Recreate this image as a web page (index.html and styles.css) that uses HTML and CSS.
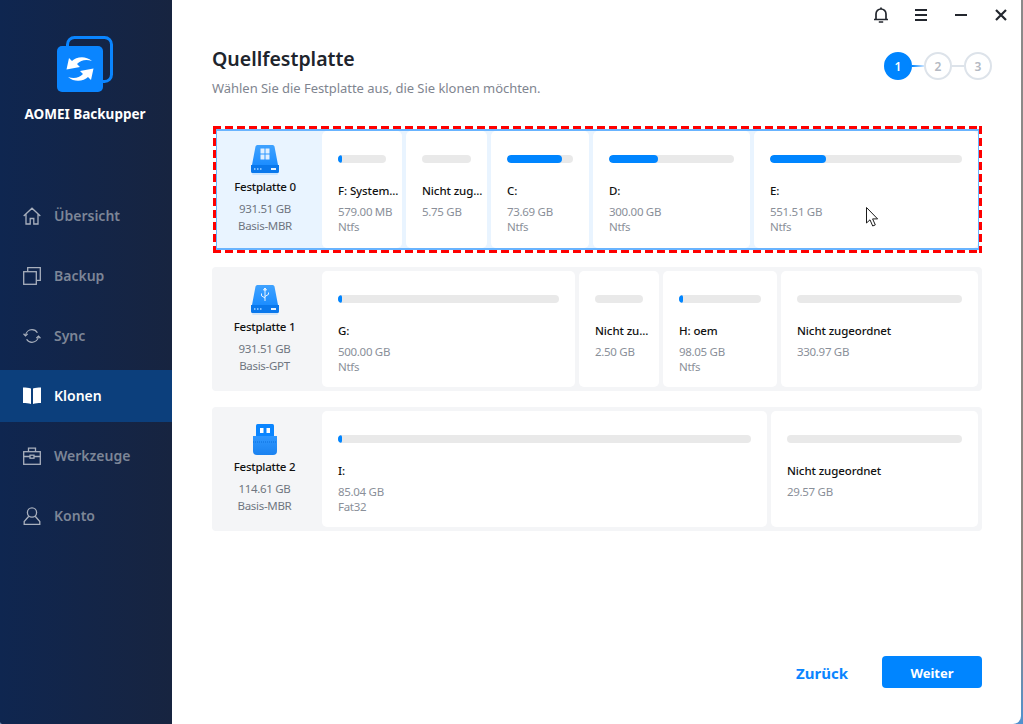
FILE: index.html
```html
<!DOCTYPE html>
<html lang="de">
<head>
<meta charset="utf-8">
<title>AOMEI Backupper</title>
<link rel="stylesheet" href="styles.css">
</head>
<body>
<div class="window">
  <aside class="sidebar">
    <div class="brand">
      <svg class="brand-logo" width="60" height="60" viewBox="0 0 60 60">
        <rect x="11.500" y="1.500" width="44" height="44" rx="7" fill="none" stroke="#0a85ff" stroke-width="3"/>
        <rect x="1" y="10" width="46" height="46" rx="5" fill="#0a85ff"/>
        <path d="M10.500 33.500 13 22l3 3c4-4 13-6 20 0-6-2-11-1-15 3l3 3z" fill="#fff"/>
        <path d="M37.500 32.500 35 44l-3-3c-4 4-13 6-20 0 6 2 11 1 15-3l-3-3z" fill="#fff"/>
      </svg>
      <div class="brand-name">AOMEI Backupper</div>
    </div>
    <nav class="nav">
      <a class="nav-item">
        <svg class="nav-icon" width="18" height="18" viewBox="0 0 18 18" fill="none" stroke="#a9b0bd" stroke-width="1.300"><path d="M.7 9 9 1.200 17.300 9M3 7.200V17h4.200v-5.500h3.600V17H15V7.200"/></svg>
        <span>Übersicht</span>
      </a>
      <a class="nav-item">
        <svg class="nav-icon" width="18" height="18" viewBox="0 0 18 18" fill="none" stroke="#a9b0bd" stroke-width="1.300"><rect x=".7" y="4.700" width="12.600" height="12.600"/><path d="M4.700 4.500V.7h12.600v12.600h-3.800"/></svg>
        <span>Backup</span>
      </a>
      <a class="nav-item">
        <svg class="nav-icon" width="20" height="18" viewBox="0 0 20 18" fill="none" stroke="#a9b0bd" stroke-width="1.300"><path d="M2.800 8.500C3.300 4.700 6.300 2 10 2c2.600 0 4.800 1.300 6 3.400M17.200 9.500c-.5 3.800-3.500 6.500-7.200 6.500-2.600 0-4.800-1.300-6-3.400"/><path d="M.6 6.500 2.800 9l2.400-2.300M19.400 11.500 17.200 9l-2.400 2.300"/></svg>
        <span>Sync</span>
      </a>
      <a class="nav-item is-active">
        <svg class="nav-icon" width="18" height="18" viewBox="0 0 18 18" fill="#fff"><path d="M0 .5c3 0 5.500.3 8 1V17c-2.500-.7-5-1-8-1zM10 1.500c2.500-.7 5-1 8-1V16c-3 0-5.500.3-8 1z"/></svg>
        <span>Klonen</span>
      </a>
      <a class="nav-item">
        <svg class="nav-icon" width="18" height="18" viewBox="0 0 18 18" fill="none" stroke="#a9b0bd" stroke-width="1.300"><rect x=".7" y="4.700" width="16.600" height="12.600"/><path d="M5.500 4.500V1.200h7v3.300M.7 9.500h6.300M11 9.500h6.300"/><rect x="7" y="8.200" width="4" height="3"/></svg>
        <span>Werkzeuge</span>
      </a>
      <a class="nav-item">
        <svg class="nav-icon" width="18" height="18" viewBox="0 0 18 18" fill="none" stroke="#a9b0bd" stroke-width="1.300"><circle cx="9" cy="5.500" r="4.600"/><path d="M5.800 9.300 1.200 14.500v2.800h15.600v-2.800l-4.600-5.200"/></svg>
        <span>Konto</span>
      </a>
    </nav>
  </aside>

  <main class="main">
    <div class="topbar">
      <svg class="top-icon" width="16" height="16" viewBox="0 0 16 16" fill="none" stroke="#23272e" stroke-width="1.700"><path d="M1 12.500h14M3 12.500V7a5 5 0 0 1 10 0v5.500M5.800 15h4.400"/><path d="M8 .5v1.500"/></svg>
      <svg class="top-icon" width="16" height="16" viewBox="0 0 16 16" fill="none" stroke="#23272e" stroke-width="2"><path d="M2 3h12M2 8h12M2 13h12"/></svg>
      <svg class="top-icon" width="16" height="16" viewBox="0 0 16 16" fill="none" stroke="#23272e" stroke-width="2"><path d="M2 8h12"/></svg>
      <svg class="top-icon" width="16" height="16" viewBox="0 0 16 16" fill="none" stroke="#23272e" stroke-width="2.200"><path d="m3 3 10 10M13 3 3 13"/></svg>
    </div>

    <header class="head">
      <div>
        <h1 class="title">Quellfestplatte</h1>
        <p class="subtitle">Wählen Sie die Festplatte aus, die Sie klonen möchten.</p>
      </div>
      <div class="stepper">
        <span class="step is-current">1</span>
        <span class="step-line is-done"></span>
        <span class="step">2</span>
        <span class="step-line"></span>
        <span class="step">3</span>
      </div>
    </header>

    <section class="disks">
      <div class="selection">
        <div class="disk-row is-selected cols-0">
          <div class="disk-info">
            <svg class="disk-icon" width="30" height="30" viewBox="0 0 30 30"><use href="#hdd"/><g fill="#fff" opacity=".85"><rect x="10.500" y="3.500" width="4" height="5"/><rect x="15.500" y="3.500" width="4" height="5"/><rect x="10.500" y="9.500" width="4" height="5"/><rect x="15.500" y="9.500" width="4" height="5"/></g></svg>
            <div class="disk-name">Festplatte 0</div>
            <div class="disk-meta">931.51 GB</div>
            <div class="disk-meta">Basis-MBR</div>
          </div>
          <div class="part"><div class="bar"><div class="fill" style="width:8%"></div></div><div class="part-name">F: System...</div><div class="part-meta">579.00 MB</div><div class="part-meta">Ntfs</div></div>
          <div class="part"><div class="bar"></div><div class="part-name">Nicht zug...</div><div class="part-meta">5.75 GB</div></div>
          <div class="part"><div class="bar"><div class="fill" style="width:84%"></div></div><div class="part-name">C:</div><div class="part-meta">73.69 GB</div><div class="part-meta">Ntfs</div></div>
          <div class="part"><div class="bar"><div class="fill" style="width:39%"></div></div><div class="part-name">D:</div><div class="part-meta">300.00 GB</div><div class="part-meta">Ntfs</div></div>
          <div class="part has-cursor"><div class="bar"><div class="fill" style="width:29%"></div></div><div class="part-name">E:</div><div class="part-meta">551.51 GB</div><div class="part-meta">Ntfs</div>
            <svg class="cursor" width="13" height="20" viewBox="0 0 13 20"><path d="M.5.500v15.500l3.500-3.200 2.700 6.200 2.600-1.100-2.700-6h5z" fill="#fff" stroke="#1c1c1c"/></svg>
          </div>
        </div>
      </div>

      <div class="disk-row cols-1">
        <div class="disk-info">
          <svg class="disk-icon" width="30" height="30" viewBox="0 0 30 30"><use href="#hdd"/><path d="M15 3v13M15 3l-1.500 2h3zM15 13l-3.500-2.200V8.500M15 11.500l3.500-2.200V7.500" fill="none" stroke="#fff" stroke-width="1" opacity=".9"/></svg>
          <div class="disk-name">Festplatte 1</div>
          <div class="disk-meta">931.51 GB</div>
          <div class="disk-meta">Basis-GPT</div>
        </div>
        <div class="part"><div class="bar"><div class="fill" style="width:2%"></div></div><div class="part-name">G:</div><div class="part-meta">500.00 GB</div><div class="part-meta">Ntfs</div></div>
        <div class="part"><div class="bar"></div><div class="part-name">Nicht zu...</div><div class="part-meta">2.50 GB</div></div>
        <div class="part"><div class="bar"><div class="fill" style="width:5%"></div></div><div class="part-name">H: oem</div><div class="part-meta">98.05 GB</div><div class="part-meta">Ntfs</div></div>
        <div class="part"><div class="bar"></div><div class="part-name">Nicht zugeordnet</div><div class="part-meta">330.97 GB</div></div>
      </div>

      <div class="disk-row cols-2">
        <div class="disk-info">
          <svg class="disk-icon" width="30" height="32" viewBox="0 0 30 32">
            <path d="M6 1.500A1.500 1.500 0 0 1 7.500 0h15A1.500 1.500 0 0 1 24 1.500V12H6z" fill="#0a85ff"/>
            <rect x="10" y="4" width="3.500" height="5" fill="#fff"/><rect x="16.500" y="4" width="3.500" height="5" fill="#fff"/>
            <path d="M3 12h24v15a4 4 0 0 1-4 4H7a4 4 0 0 1-4-4z" fill="url(#stick)"/>
            <path d="M3 18h24" stroke="#0a6fdc" stroke-width="1" stroke-dasharray="1 1"/>
          </svg>
          <div class="disk-name">Festplatte 2</div>
          <div class="disk-meta">114.61 GB</div>
          <div class="disk-meta">Basis-MBR</div>
        </div>
        <div class="part"><div class="bar"><div class="fill" style="width:1%"></div></div><div class="part-name">I:</div><div class="part-meta">85.04 GB</div><div class="part-meta">Fat32</div></div>
        <div class="part"><div class="bar"></div><div class="part-name">Nicht zugeordnet</div><div class="part-meta">29.57 GB</div></div>
      </div>
    </section>

    <footer class="actions">
      <button class="btn-back">Zurück</button>
      <button class="btn-next">Weiter</button>
    </footer>
  </main>
</div>

<svg class="defs" width="0" height="0">
  <defs>
    <linearGradient id="top" x1="0" y1="0" x2="0" y2="1"><stop offset="0" stop-color="#3fa2ff"/><stop offset="1" stop-color="#1c8dff"/></linearGradient>
    <linearGradient id="stick" x1="0" y1="0" x2="0" y2="1"><stop offset="0" stop-color="#2f97ff"/><stop offset="1" stop-color="#1a82f0"/></linearGradient>
    <g id="hdd">
      <rect x="2" y="27" width="26" height="3" rx="1.500" fill="#0a85ff" opacity=".14"/>
      <path d="M5.500 1.500A2 2 0 0 1 7.500 0h15a2 2 0 0 1 2 1.500L28 20H2z" fill="url(#top)"/>
      <path d="M1 20h28v6.500a1.500 1.500 0 0 1-1.500 1.500h-25A1.500 1.500 0 0 1 1 26.500z" fill="#0a78ec"/>
      <rect x="4" y="23" width="1.500" height="2" fill="#7fc0ff"/><rect x="7" y="23" width="1.500" height="2" fill="#7fc0ff"/><rect x="10" y="23" width="1.500" height="2" fill="#7fc0ff"/>
      <rect x="21" y="23" width="5" height="2" fill="#e6f2ff"/>
    </g>
  </defs>
</svg>
</body>
</html>
```
FILE: styles.css
```css
* { box-sizing: border-box; }
html, body { height: 100%; }
body {
  margin: 0;
  overflow: hidden;
  background: linear-gradient(to bottom, #8a8a8a 0%, #8f8780 85%, #4f92d0 100%);
  font-family: "Noto Sans", "Open Sans", sans-serif;
  font-size: 12px;
}
.defs { position: absolute; }
.window {
  display: flex;
  width: 1021px;
  height: 724px;
  background: #fff;
  border-radius: 0 0 8px 2px;
  overflow: hidden;
}

/* sidebar */
.sidebar {
  width: 172px;
  flex: none;
  background: linear-gradient(to right, #0f2650, #172440);
}
.brand { height: 190px; padding-top: 36px; }
.brand-logo { display: block; margin-left: 56px; }
.brand-name {
  margin: 9px 0 0 -2px;
  text-align: center;
  color: #fff;
  font-size: 13.500px;
  font-weight: 700;
}
.nav { display: flex; flex-direction: column; gap: 8px; }
.nav-item {
  display: flex;
  align-items: center;
  height: 52px;
  padding-left: 23px;
  color: #7d8697;
  font-size: 14px;
  font-weight: 600;
}
.nav-item span { margin-top: -2px; }
.nav-icon { flex: none; width: 18px; margin-right: 13px; }
.nav-item.is-active { background: #0c3f7c; color: #fff; }

/* main */
.main { flex: 1; display: flex; flex-direction: column; padding-left: 40px; min-width: 0; }
.topbar {
  display: flex;
  justify-content: flex-end;
  gap: 24px;
  height: 30px;
  padding: 7px 12px 0 0;
}
.head {
  display: flex;
  justify-content: space-between;
  width: 780px;
  height: 96px;
}
.title { margin: 16px 0 0; font-size: 19.500px; font-weight: 600; line-height: 26px; color: #20242c; }
.subtitle { margin: 7px 0 0; font-size: 13px; letter-spacing: -.04px; line-height: 18px; color: #7f8590; }
.stepper { display: flex; align-items: center; height: 28px; margin-top: 22px; }
.step {
  display: flex;
  align-items: center;
  justify-content: center;
  width: 28px;
  height: 28px;
  border: 2px solid #dde3ea;
  border-radius: 50%;
  color: #b3b8c2;
  font-size: 12px;
  font-weight: 600;
}
.step.is-current { background: #0085ff; border-color: #0085ff; color: #fff; }
.step-line { width: 12px; height: 2px; background: #dde3ea; }
.step-line.is-done { background: linear-gradient(to right, #0085ff, #cfe6ff); }

/* disks */
.disks { display: flex; flex-direction: column; width: 770px; }
.selection {
  margin: 0 0 14px 1px;
  padding: 3px;
  background:
    repeating-linear-gradient(to right, #f00 0 8px, transparent 8px 12px) top / 100% 3px no-repeat,
    repeating-linear-gradient(to right, #f00 0 8px, transparent 8px 12px) bottom / 100% 3px no-repeat,
    repeating-linear-gradient(to bottom, #f00 0 8px, transparent 8px 12px) left / 3px 100% no-repeat,
    repeating-linear-gradient(to bottom, #f00 0 8px, transparent 8px 12px) right / 3px 100% no-repeat;
}
.disk-row {
  display: grid;
  gap: 4px;
  height: 124px;
  padding: 4px;
  border-radius: 4px;
  background: #f4f5f7;
  margin-bottom: 16px;
}
.disk-row.is-selected {
  height: 121px;
  margin: 0;
  padding: 0;
  border-radius: 0;
  background: #e9f4ff;
  border: solid #69b4ff;
  border-width: 2px 1px;
}
.cols-0 { grid-template-columns: 101px 80px 81px 98px 157px 224px; }
.cols-1 { grid-template-columns: 102px 253px 80px 114px 197px; }
.cols-2 { grid-template-columns: 102px 445px 207px; }

.disk-info { padding-right: 5px; text-align: center; }
.disk-icon { display: block; margin: 14px auto 0; }
.cols-2 .disk-icon { margin-top: 13px; }
.disk-name {
  margin-top: 3px;
  font-size: 11.500px;
  font-weight: 500;
  letter-spacing: -.25px;
  line-height: 18px;
  color: #111;
}
.cols-2 .disk-name { margin-top: 2px; }
.disk-name + .disk-meta { margin-top: 4px; }
.disk-meta { font-size: 11.500px; letter-spacing: -.3px; line-height: 17px; color: #6f7580; }

.part {
  position: relative;
  padding: 24px 0 0 16px;
  background: #fff;
  border-radius: 5px;
  white-space: nowrap;
}
.bar {
  height: 8px;
  margin-right: 16px;
  border-radius: 4px;
  background: #e9e9e9;
  overflow: hidden;
}
.fill { height: 100%; border-radius: 4px; background: #0085ff; min-width: 4px; }
.part-name {
  margin-top: 19px;
  font-size: 11.500px;
  letter-spacing: -.1px;
  line-height: 18px;
  font-weight: 500;
  color: #111;
}
.part-name + .part-meta { margin-top: 4px; }
.part-meta { font-size: 11.500px; letter-spacing: -.3px; line-height: 15px; color: #8a8f99; }
.cursor { position: absolute; left: 112px; top: 76px; }

/* footer */
.actions {
  display: flex;
  align-items: center;
  justify-content: flex-end;
  gap: 34px;
  width: 770px;
  margin-top: auto;
  margin-bottom: 36px;
}
.btn-back, .btn-next {
  border: 0;
  font-family: inherit;
  font-weight: 700;
  padding: 2px 0 0;
}
.btn-back { background: none; color: #0a85ff; font-size: 15px; }
.btn-next { width: 100px; height: 32px; border-radius: 4px; background: #0085ff; color: #fff; font-size: 13px; }
```
